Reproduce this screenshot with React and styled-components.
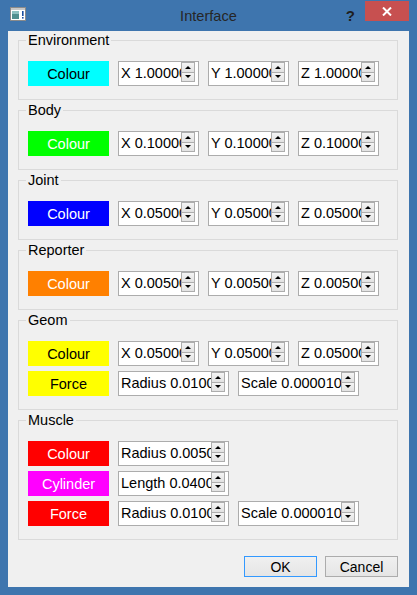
import React from "react";
import styled, { createGlobalStyle } from "styled-components";

const GlobalStyle = createGlobalStyle`
  html, body {
    margin: 0;
    padding: 0;
    background: #3e75ae;
  }
  * {
    box-sizing: border-box;
  }
`;

const Window = styled.div`
  width: 417px;
  height: 595px;
  background: #3e75ae;
  display: flex;
  flex-direction: column;
  font-family: "Liberation Sans", Arial, sans-serif;
  font-size: 14.5px;
  color: #000;
  overflow: hidden;
`;

const TitleBar = styled.div`
  height: 31px;
  display: grid;
  grid-template-columns: 1fr auto 1fr;
  align-items: start;
`;

const TitleLeft = styled.div`
  padding: 7px 0 0 10px;
`;

const Title = styled.div`
  padding-top: 8px;
  font-size: 14.6px;
  color: #262626;
`;

const TitleRight = styled.div`
  display: flex;
  justify-content: flex-end;
  align-items: flex-start;
  padding-right: 8px;
`;

const Help = styled.div`
  margin: 7px 10px 0 0;
  font-weight: bold;
  font-size: 15px;
  color: #1e1e1e;
`;

const CloseButton = styled.div`
  width: 44px;
  height: 20px;
  margin-top: 1px;
  background: #c75050;
  display: flex;
  align-items: center;
  justify-content: center;
`;

const Content = styled.div`
  flex: 1;
  margin: 0 8px 8px 8px;
  background: #f0f0f0;
  padding: 1px 11px 10px 10px;
  display: flex;
  flex-direction: column;
`;

const Group = styled.fieldset`
  margin: 0 0 2px 0;
  border: 1px solid #dadada;
  padding: 13px 0 13px 9px;
  display: flex;
  flex-direction: column;
  gap: 5px;
  min-width: 0;
`;

const Legend = styled.legend`
  padding: 0 2px;
  margin-left: -2px;
  line-height: 16px;
`;

const Row = styled.div`
  display: flex;
  gap: 9px;
`;

const ColourButton = styled.div`
  width: 81px;
  height: 25px;
  background: ${(p) => p.$bg};
  color: ${(p) => p.$fg};
  display: flex;
  align-items: center;
  justify-content: center;
`;

const SpinBox = styled.div`
  width: ${(p) => p.$w}px;
  height: 25px;
  border: 1px solid #acacac;
  background: #fff;
  display: flex;
`;

const SpinText = styled.div`
  flex: 1;
  overflow: hidden;
  white-space: nowrap;
  padding-left: 2px;
  line-height: 23px;
`;

const SpinButtons = styled.div`
  width: 14px;
  margin: 0 3px 3px 0;
  display: flex;
  flex-direction: column;
`;

const SpinHalf = styled.div`
  flex: 1;
  border: 1px solid #adadad;
  background: linear-gradient(#f4f4f4, #e2e2e2);
  display: flex;
  align-items: center;
  justify-content: center;
  & + & {
    border-top: none;
  }
`;

const Arrow = styled.div`
  width: 0;
  height: 0;
  border-left: 3px solid transparent;
  border-right: 3px solid transparent;
  ${(p) =>
    p.$down ? "border-top: 3px solid #000;" : "border-bottom: 3px solid #000;"}
`;

const Footer = styled.div`
  margin-top: auto;
  display: flex;
  justify-content: flex-end;
  gap: 8px;
`;

const DialogButton = styled.div`
  width: ${(p) => p.$w}px;
  height: 21px;
  border: 1px solid ${(p) => (p.$default ? "#3399ff" : "#acacac")};
  background: linear-gradient(#f0f0f0, #e5e5e5);
  display: flex;
  align-items: center;
  justify-content: center;
  font-size: 14px;
`;

function Spin({ text, w = 81 }) {
  return (
    <SpinBox $w={w}>
      <SpinText>{text}</SpinText>
      <SpinButtons>
        <SpinHalf>
          <Arrow />
        </SpinHalf>
        <SpinHalf>
          <Arrow $down />
        </SpinHalf>
      </SpinButtons>
    </SpinBox>
  );
}

function WindowIcon() {
  return (
    <svg width="16" height="14" viewBox="0 0 16 14">
      <rect x="0.5" y="0.5" width="15" height="13" fill="#fff" stroke="#8a8a8a" />
      <rect x="1" y="1" width="14" height="2" fill="#c8c8c8" />
      <rect x="2" y="4" width="7" height="8" fill="#4f8f8f" />
      <rect x="2" y="4" width="7" height="3" fill="#8cc0c0" />
      <rect x="12" y="4" width="1.6" height="5" fill="#1a4fa0" />
      <rect x="12" y="10" width="1.6" height="1.6" fill="#1a4fa0" />
    </svg>
  );
}

const xyz = (v) => [`X ${v}`, `Y ${v}`, `Z ${v}`];

const groups = [
  {
    title: "Environment",
    rows: [{ label: "Colour", bg: "#00ffff", fg: "#000", spins: xyz("1.000000") }],
  },
  {
    title: "Body",
    rows: [{ label: "Colour", bg: "#00ff00", fg: "#fff", spins: xyz("0.100000") }],
  },
  {
    title: "Joint",
    rows: [{ label: "Colour", bg: "#0000ff", fg: "#fff", spins: xyz("0.050000") }],
  },
  {
    title: "Reporter",
    rows: [{ label: "Colour", bg: "#ff8000", fg: "#fff", spins: xyz("0.005000") }],
  },
  {
    title: "Geom",
    rows: [
      { label: "Colour", bg: "#ffff00", fg: "#000", spins: xyz("0.050000") },
      {
        label: "Force",
        bg: "#ffff00",
        fg: "#000",
        spins: ["Radius 0.010000", "Scale 0.000010"],
        widths: [111, 121],
      },
    ],
  },
  {
    title: "Muscle",
    rows: [
      { label: "Colour", bg: "#ff0000", fg: "#fff", spins: ["Radius 0.005000"], widths: [111] },
      { label: "Cylinder", bg: "#ff00ff", fg: "#fff", spins: ["Length 0.040000"], widths: [111] },
      {
        label: "Force",
        bg: "#ff0000",
        fg: "#fff",
        spins: ["Radius 0.010000", "Scale 0.000010"],
        widths: [111, 121],
      },
    ],
  },
];

export default function App() {
  return (
    <>
      <GlobalStyle />
      <Window>
        <TitleBar>
          <TitleLeft>
            <WindowIcon />
          </TitleLeft>
          <Title>Interface</Title>
          <TitleRight>
            <Help>?</Help>
            <CloseButton>
              <svg width="10" height="9" viewBox="0 0 10 9">
                <path d="M1 0.5 L9 8.5 M9 0.5 L1 8.5" stroke="#fff" strokeWidth="2" />
              </svg>
            </CloseButton>
          </TitleRight>
        </TitleBar>
        <Content>
          {groups.map((g) => (
            <Group key={g.title}>
              <Legend>{g.title}</Legend>
              {g.rows.map((r, i) => (
                <Row key={i}>
                  <ColourButton $bg={r.bg} $fg={r.fg}>
                    {r.label}
                  </ColourButton>
                  {r.spins.map((s, j) => (
                    <Spin key={j} text={s} w={r.widths ? r.widths[j] : 81} />
                  ))}
                </Row>
              ))}
            </Group>
          ))}
          <Footer>
            <DialogButton $w={73} $default>
              OK
            </DialogButton>
            <DialogButton $w={73}>Cancel</DialogButton>
          </Footer>
        </Content>
      </Window>
    </>
  );
}
